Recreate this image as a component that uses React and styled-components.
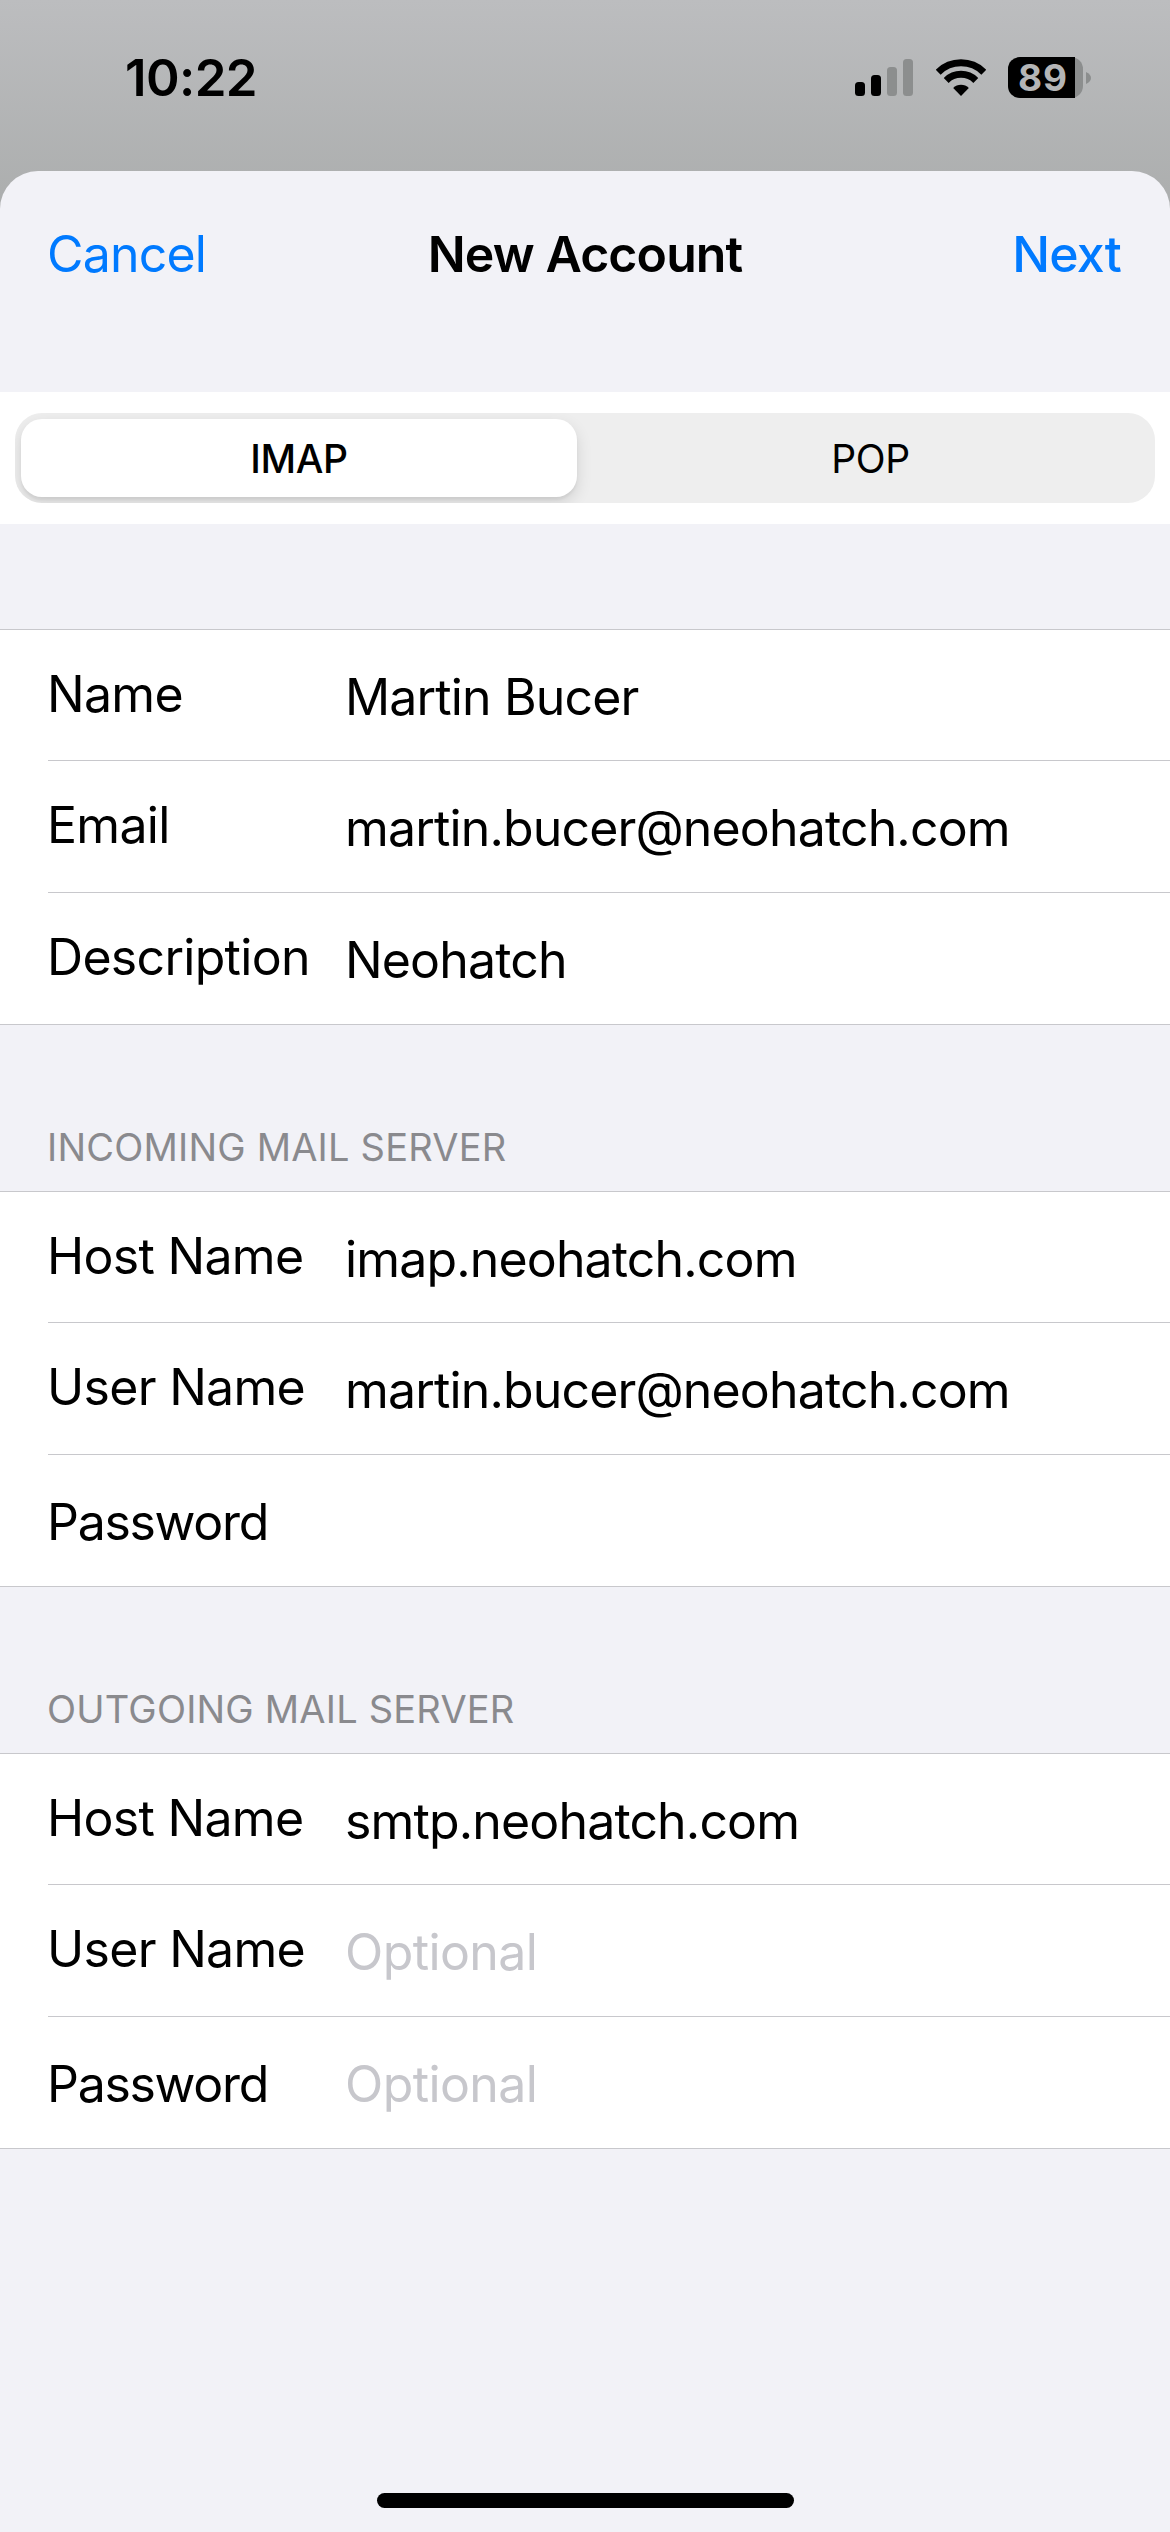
import React from "react";
import styled, { createGlobalStyle } from "styled-components";

const Global = createGlobalStyle`
  html, body { margin: 0; padding: 0; }
  body { font-family: Inter, "Liberation Sans", sans-serif; -webkit-font-smoothing: antialiased; }
  * { box-sizing: border-box; }
`;

const Page = styled.div`
  width: 1170px;
  height: 2532px;
  overflow: hidden;
  display: flex;
  flex-direction: column;
  background: linear-gradient(#bcbdbf 0, #abadad 215px, #abadad 100%);
`;

const StatusBar = styled.div`
  height: 171px;
  flex: none;
  display: flex;
  align-items: flex-start;
  justify-content: space-between;
  padding: 57px 79px 0 125px;
`;

const Clock = styled.div`
  font-size: 51px;
  line-height: 42px;
  font-weight: 600;
  color: #000;
  letter-spacing: -0.6px;
`;

const Indicators = styled.div`
  display: flex;
  align-items: flex-start;
`;

const Signal = styled.svg`
  width: 58px;
  height: 37px;
  margin-top: 2px;
  display: block;
`;

const Wifi = styled.svg`
  width: 50px;
  height: 37px;
  margin: 2px 0 0 23px;
  display: block;
`;

const Battery = styled.div`
  display: flex;
  align-items: center;
  margin-left: 22px;
`;

const BatteryShell = styled.div`
  width: 75px;
  height: 41px;
  border-radius: 12px;
  background: #8c8e8e;
  display: flex;
`;

const BatteryFill = styled.div`
  width: 67px;
  height: 41px;
  border-radius: 12px 0 0 12px;
  background: #000;
  color: #b4b5b6;
  font-size: 37px;
  line-height: 41px;
  font-weight: 700;
  text-align: center;
  padding-left: 3px;
  letter-spacing: 1px;
`;

const BatteryNub = styled.svg`
  width: 5px;
  height: 12px;
  margin-left: 3px;
  display: block;
`;

const Sheet = styled.div`
  flex: 1;
  display: flex;
  flex-direction: column;
  background: #f2f2f7;
  border-radius: 38px 38px 0 0;
`;

const NavBar = styled.div`
  height: 221px;
  flex: none;
  display: grid;
  grid-template-columns: 1fr auto 1fr;
  align-items: start;
  padding: 52px 47px 0;
  font-size: 50px;
  line-height: 62px;
`;

const NavAction = styled.div`
  color: #007aff;
  font-weight: ${(p) => (p.$strong ? 500 : 400)};
  text-align: ${(p) => (p.$end ? "right" : "left")};
  margin-right: ${(p) => (p.$end ? "2px" : "0")};
  letter-spacing: -0.8px;
`;

const Title = styled.div`
  color: #000;
  font-weight: 600;
  letter-spacing: -0.9px;
`;

const Band = styled.div`
  height: 132px;
  flex: none;
  background: #fff;
  padding: 21px 15px;
`;

const Segmented = styled.div`
  height: 90px;
  padding: 6px 0 6px 6px;
  border-radius: 27px;
  background: #eeeeee;
  overflow: hidden;
  display: grid;
  grid-template-columns: 556px 1fr;
  column-gap: 9px;
`;

const Segment = styled.div`
  display: flex;
  align-items: center;
  justify-content: center;
  font-size: 39px;
  letter-spacing: -0.3px;
  color: #000;
  font-weight: ${(p) => (p.$active ? 500 : 400)};
  border-radius: 21px;
  background: ${(p) => (p.$active ? "#fff" : "transparent")};
  box-shadow: ${(p) => (p.$active ? "0 6px 16px rgba(0,0,0,0.12), 0 3px 3px rgba(0,0,0,0.05)" : "none")};
`;

const Gap = styled.div`
  height: 105px;
  flex: none;
`;

const Group = styled.div`
  background: #fff;
  border-top: 1px solid #c8c8cc;
  border-bottom: 1px solid #c8c8cc;
  flex: none;
`;

const Row = styled.div`
  height: 131.33px;
  margin-left: 48px;
  display: flex;
  align-items: flex-start;
  font-size: 50px;
  line-height: 60px;
  border-bottom: ${(p) => (p.$last ? "0" : "1px solid #c8c8cc")};
`;

const Label = styled.div`
  width: 298px;
  flex: none;
  margin: ${(p) => (p.$low ? "37px" : "34px")} 0 0 -1px;
  color: #000;
  letter-spacing: ${(p) => (p.$low ? "-1.3px" : "-0.7px")};
`;

const Value = styled.div`
  margin-top: 37px;
  color: ${(p) => (p.$placeholder ? "#c7c7cc" : "#000")};
  letter-spacing: ${(p) => (p.$placeholder ? "-0.6px" : "-0.85px")};
`;

const SectionHeader = styled.div`
  height: 166px;
  flex: none;
  display: flex;
  align-items: flex-end;
  padding: 0 47px 24px;
  font-size: 38px;
  line-height: 40px;
  color: #8a8a8e;
  letter-spacing: 0.2px;
`;

const HomeBar = styled.div`
  width: 417px;
  height: 15px;
  flex: none;
  margin: auto auto 24px;
  border-radius: 8px;
  background: #000;
`;

function FieldRow({ label, value, placeholder, last, low }) {
  return (
    <Row $last={last}>
      <Label $low={low}>{label}</Label>
      {value ? <Value>{value}</Value> : null}
      {placeholder ? <Value $placeholder>{placeholder}</Value> : null}
    </Row>
  );
}

export default function App() {
  return (
    <Page>
      <Global />
      <StatusBar>
        <Clock>10:22</Clock>
        <Indicators>
          <Signal viewBox="0 0 58 37">
            <rect x="0" y="23" width="10" height="14" rx="3.5" fill="#000" />
            <rect x="16" y="16" width="10" height="21" rx="3.5" fill="#000" />
            <rect x="32" y="8" width="10" height="29" rx="3.5" fill="#8c8e8e" />
            <rect x="48" y="0" width="10" height="37" rx="3.5" fill="#8c8e8e" />
          </Signal>
          <Wifi viewBox="0 0 50 37">
            <path d="M25 37 L17.2 29 A11 11 0 0 1 32.8 29 Z" fill="#000" />
            <path d="M10.2 21.4 A21 21 0 0 1 39.8 21.4" fill="none" stroke="#000" strokeWidth="7" />
            <path d="M2.2 13.2 A32.5 32.5 0 0 1 47.8 13.2" fill="none" stroke="#000" strokeWidth="7" />
          </Wifi>
          <Battery>
            <BatteryShell>
              <BatteryFill>89</BatteryFill>
            </BatteryShell>
            <BatteryNub viewBox="0 0 5 12">
              <path d="M0 0 Q5 2.5 5 6 Q5 9.5 0 12 Z" fill="#8c8e8e" />
            </BatteryNub>
          </Battery>
        </Indicators>
      </StatusBar>
      <Sheet>
        <NavBar>
          <NavAction>Cancel</NavAction>
          <Title>New Account</Title>
          <NavAction $strong $end>Next</NavAction>
        </NavBar>
        <Band>
          <Segmented>
            <Segment $active>IMAP</Segment>
            <Segment>POP</Segment>
          </Segmented>
        </Band>
        <Gap />
        <Group>
          <FieldRow label="Name" value="Martin Bucer" />
          <FieldRow label="Email" value="martin.bucer@neohatch.com" />
          <FieldRow label="Description" value="Neohatch" last />
        </Group>
        <SectionHeader>INCOMING MAIL SERVER</SectionHeader>
        <Group>
          <FieldRow label="Host Name" value="imap.neohatch.com" />
          <FieldRow label="User Name" value="martin.bucer@neohatch.com" />
          <FieldRow label="Password" low last />
        </Group>
        <SectionHeader>OUTGOING MAIL SERVER</SectionHeader>
        <Group>
          <FieldRow label="Host Name" value="smtp.neohatch.com" />
          <FieldRow label="User Name" placeholder="Optional" />
          <FieldRow label="Password" placeholder="Optional" low last />
        </Group>
        <HomeBar />
      </Sheet>
    </Page>
  );
}
